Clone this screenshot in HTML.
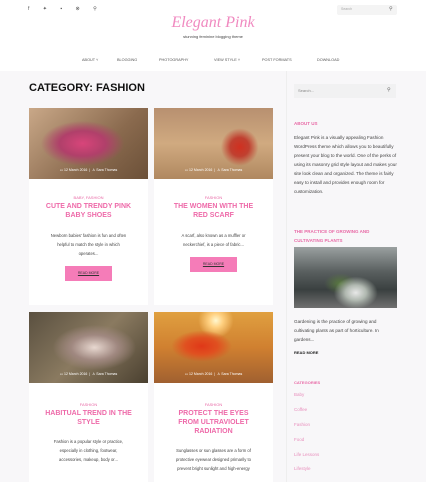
<!DOCTYPE html>
<html><head><meta charset="utf-8"><style>
*{margin:0;padding:0;box-sizing:border-box}
body{width:426px;height:482px;overflow:hidden;background:#f8f7f9;font-family:"Liberation Sans",sans-serif;position:relative}
.abs{position:absolute}
.hdr{left:0;top:0;width:426px;height:71px;background:#fff}
.card{background:#fff;width:119px}
.img{width:119px;height:71px;position:relative}
.meta{position:absolute;bottom:7px;left:0;width:100%;text-align:center;font-size:3.5px;color:#fff}
.cat{font-size:4px;color:#e86aa6;text-align:center}
.t{font-size:7px;font-weight:bold;color:#ee6aa9;text-align:center;line-height:9px}
.ex{font-size:4.2px;color:#444;text-align:center;line-height:9px}
.btn{background:#f57cb8;font-size:3.5px;color:#333;text-align:center;line-height:15px;width:47px;height:15px;text-decoration:underline}
.sb{font-size:4.6px;color:#444;line-height:9px}
.sh{font-size:4.5px;color:#e86aa6;font-weight:bold}
.li{font-size:4.5px;color:#e890bd}
.nav{font-size:3.8px;color:#555;top:58px}
</style></head><body>
<div class="abs hdr"></div>
<div class="abs" style="left:28px;top:6px;font-size:5px;color:#555;letter-spacing:6px">f ✦ ▪ ⊗ ⚲</div>
<div class="abs" style="left:337px;top:5px;width:60px;height:10px;background:#f4f4f4;border-radius:2px"></div>
<div class="abs" style="left:341px;top:7px;font-size:3.5px;color:#aaa">Search</div>
<div class="abs" style="left:389px;top:6px;font-size:5px;color:#666">⚲</div>
<div class="abs" style="left:0;top:14px;width:426px;text-align:center;font-family:'Liberation Serif',serif;font-style:italic;font-size:16px;color:#f08ac0">Elegant Pink</div>
<div class="abs" style="left:0;top:34px;width:426px;text-align:center;font-size:4px;color:#444">stunning feminine blogging theme</div>
<div class="abs nav" style="left:82px">ABOUT ˅</div>
<div class="abs nav" style="left:117px">BLOGGING</div>
<div class="abs nav" style="left:159px">PHOTOGRAPHY</div>
<div class="abs nav" style="left:214px">VIEW STYLE ˅</div>
<div class="abs nav" style="left:262px">POST FORMATS</div>
<div class="abs nav" style="left:317px">DOWNLOAD</div>

<div class="abs" style="left:29px;top:82px;font-size:11px;font-weight:bold;color:#111">CATEGORY: FASHION</div>

<div class="abs card" style="left:29px;top:108px;height:197px">
<div class="img" style="background:radial-gradient(ellipse at 45% 50%,#d8457a 0,#b0406a 25%,transparent 45%),linear-gradient(135deg,#c9a888,#8a6a4e 60%,#6b5038)"><div class="meta">▭ 12 March 2016 &nbsp;|&nbsp; ♙ Sara Thomas</div></div>
<div class="cat" style="margin-top:16px">BABY, FASHION</div>
<div class="t" style="margin-top:2px">CUTE AND TRENDY PINK<br>BABY SHOES</div>
<div class="ex" style="margin-top:11px;padding:0 18px">Newborn babies' fashion is fun and often helpful to match the style in which operates...</div>
<div class="btn" style="margin:8px 0 0 36px">READ MORE</div></div>

<div class="abs card" style="left:154px;top:108px;height:197px">
<div class="img" style="background:radial-gradient(circle at 72% 55%,#d03020 0,#c04030 10%,transparent 20%),linear-gradient(180deg,#b89070,#d0aa80 50%,#b08860)"><div class="meta">▭ 12 March 2016 &nbsp;|&nbsp; ♙ Sara Thomas</div></div>
<div class="cat" style="margin-top:16px">FASHION</div>
<div class="t" style="margin-top:2px">THE WOMEN WITH THE<br>RED SCARF</div>
<div class="ex" style="margin-top:11px;padding:0 18px">A scarf, also known as a muffler or neckerchief, is a piece of fabric...</div>
<div class="btn" style="margin:8px 0 0 36px">READ MORE</div></div>

<div class="abs card" style="left:29px;top:312px;height:170px">
<div class="img" style="background:radial-gradient(ellipse at 55% 50%,#e8d8d0 0,#a08880 25%,transparent 45%),linear-gradient(135deg,#5a5040,#8a7a60 50%,#4a4030)"><div class="meta">▭ 12 March 2016 &nbsp;|&nbsp; ♙ Sara Thomas</div></div>
<div class="cat" style="margin-top:19px">FASHION</div>
<div class="t" style="margin-top:2px">HABITUAL TREND IN THE<br>STYLE</div>
<div class="ex" style="margin-top:10px;padding:0 22px">Fashion is a popular style or practice, especially in clothing, footwear, accessories, makeup, body or...</div></div>

<div class="abs card" style="left:154px;top:312px;height:170px">
<div class="img" style="background:radial-gradient(ellipse at 40% 48%,#e03818 0,#e05020 16%,transparent 30%),radial-gradient(circle at 52% 12%,#fff8d0 0,#ffd080 8%,transparent 20%),linear-gradient(180deg,#e0a040,#d08030 50%,#a06030)"><div class="meta">▭ 12 March 2016 &nbsp;|&nbsp; ♙ Sara Thomas</div></div>
<div class="cat" style="margin-top:19px">FASHION</div>
<div class="t" style="margin-top:2px">PROTECT THE EYES<br>FROM ULTRAVIOLET<br>RADIATION</div>
<div class="ex" style="margin-top:10px;padding:0 20px">Sunglasses or sun glasses are a form of protective eyewear designed primarily to prevent bright sunlight and high-energy</div></div>

<div class="abs" style="left:286px;top:71px;width:1px;height:411px;background:#eee"></div>
<div class="abs" style="left:294px;top:84px;width:102px;height:14px;background:#f1f1f2"></div>
<div class="abs" style="left:298px;top:88px;font-size:4px;color:#888">Search...</div>
<div class="abs" style="left:387px;top:87px;font-size:5px;color:#666">⚲</div>
<div class="abs sh" style="left:294px;top:121px">ABOUT US</div>
<div class="abs sb" style="left:294px;top:133px;width:104px">Elegant Pink is a visually appealing Fashion WordPress theme which allows you to beautifully present your blog to the world. One of the perks of using its masonry grid style layout and makes your site look clean and organized. The theme is fairly easy to install and provides enough room for customization.</div>
<div class="abs sh" style="left:294px;top:227px;line-height:9px;width:104px">THE PRACTICE OF GROWING AND CULTIVATING PLANTS</div>
<div class="abs" style="left:294px;top:247px;width:103px;height:61px;background:radial-gradient(ellipse at 60% 75%,#e8e8e8 0,#b0b8b0 12%,transparent 25%),radial-gradient(ellipse at 45% 60%,#5a7a40 0,transparent 20%),linear-gradient(180deg,#9aa0a0,#5a6060 40%,#3a4040 70%,#707070)"></div>
<div class="abs sb" style="left:294px;top:317px;width:104px">Gardening is the practice of growing and cultivating plants as part of horticulture. In gardens...</div>
<div class="abs" style="left:294px;top:350px;font-size:4px;font-weight:bold;color:#222">READ MORE</div>
<div class="abs sh" style="left:294px;top:380px;font-size:4px">CATEGORIES</div>
<div class="abs li" style="left:294px;top:392px">Baby</div>
<div class="abs li" style="left:294px;top:407px">Coffee</div>
<div class="abs li" style="left:294px;top:422px">Fashion</div>
<div class="abs li" style="left:294px;top:437px">Food</div>
<div class="abs li" style="left:294px;top:452px">Life Lessons</div>
<div class="abs li" style="left:294px;top:466px">Lifestyle</div>
</body></html>
